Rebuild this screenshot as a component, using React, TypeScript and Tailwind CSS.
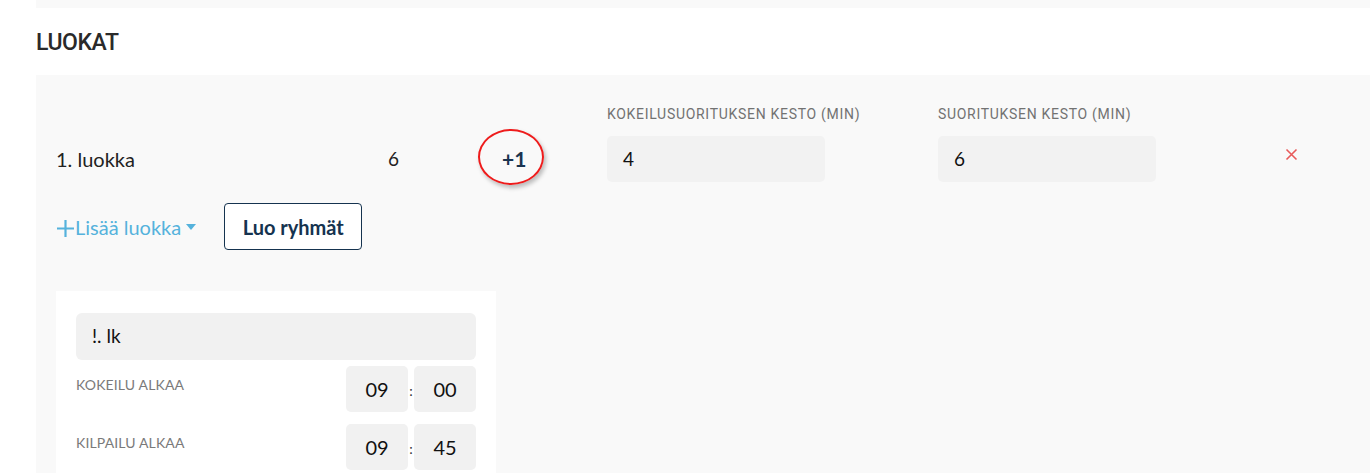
const body = "font-['Lato','Open_Sans',sans-serif]";
const cond = "font-['Roboto','Liberation_Sans',sans-serif]";

function DurationField({ label, value, width }: { label: string; value: string; width: string }) {
  return (
    <div className={`${width} flex flex-col`}>
      <span className={`${cond} text-[14px] leading-[18px] tracking-[0.05em] text-[#727272] mb-[13px]`}>{label}</span>
      <div className="w-[218px] h-[46px] rounded-[5px] bg-[#f2f2f2] flex items-center px-4 text-[19px] text-[#111]">
        {value}
      </div>
    </div>
  );
}

function TimeRow({ label, hh, mm }: { label: string; hh: string; mm: string }) {
  return (
    <div className="flex items-start justify-between">
      <span className="pt-[8px] text-[14px] text-[#7a7a7a] tracking-[0.01em]">{label}</span>
      <div className="flex items-center">
        <div className="w-[62px] h-[46px] rounded-[5px] bg-[#f1f1f1] flex items-center justify-center text-[20px] text-[#111]">
          {hh}
        </div>
        <span className="w-[6px] text-center text-[14px] text-[#333] leading-none mt-[4px]">:</span>
        <div className="w-[62px] h-[46px] rounded-[5px] bg-[#f1f1f1] flex items-center justify-center text-[20px] text-[#111]">
          {mm}
        </div>
      </div>
    </div>
  );
}

export default function App() {
  return (
    <div className={`${body} bg-white w-[1370px] h-[473px] overflow-hidden pl-[36px]`}>
      <div className="h-[8px] bg-[#f9f9f9]" />
      <h2 className={`${cond} font-medium text-[23px] tracking-[-0.02em] text-[#2a2a2a] h-[67px] flex items-center pt-[3px]`}>
        LUOKAT
      </h2>

      <div className="bg-[#f9f9f9] h-[400px] pl-[20px] pt-[30px]">
        {/* class row */}
        <div className="flex items-end">
          <div className="w-[332px] h-[46px] flex items-center text-[20px] text-[#222]">1. luokka</div>
          <div className="w-[114px] h-[46px] flex items-center text-[19px] text-[#222]">6</div>
          <div className="w-[105px] h-[46px] flex items-center">
            <div className="relative">
              <span className="text-[21px] font-bold text-[#1a3450]">+1</span>
              <span className="absolute left-1/2 top-1/2 -translate-x-1/2 -translate-y-1/2 ml-[-3px] mt-[-2px] w-[66px] h-[56px] rounded-[50%] border-2 border-[#ee1c1c] shadow-[2px_3px_4px_rgba(0,0,0,0.25)]" />
            </div>
          </div>
          <DurationField label="KOKEILUSUORITUKSEN KESTO (MIN)" value="4" width="w-[331px]" />
          <DurationField label="SUORITUKSEN KESTO (MIN)" value="6" width="w-[347px]" />
          <div className="h-[46px] flex items-start pt-[12px] text-[#e85a5a]">
            <svg width="13" height="13" viewBox="0 0 13 13" stroke="currentColor" strokeWidth="1.6">
              <path d="M1.5 1.5l10 10M11.5 1.5l-10 10" />
            </svg>
          </div>
        </div>

        {/* actions */}
        <div className="flex items-center mt-[21px] gap-[28px]">
          <button className="flex items-center text-[20px] text-[#55b2dc]">
            <svg width="19" height="19" viewBox="0 0 19 19" stroke="currentColor" strokeWidth="2.2" className="mt-[3px]">
              <path d="M9.5 1v17M1 9.5h17" />
            </svg>
            <span>Lisää luokka</span>
            <svg width="10" height="6" viewBox="0 0 10 6" fill="currentColor" className="ml-[5px]">
              <path d="M0 0h10L5 6z" />
            </svg>
          </button>
          <button className="h-[47px] w-[138px] rounded-[4px] border border-[#15334f] text-[20px] font-bold text-[#15334f] bg-white">
            Luo ryhmät
          </button>
        </div>

        {/* group card */}
        <div className="mt-[41px] w-[440px] bg-white p-[20px] pt-[22px] flex flex-col gap-[6px]">
          <div className="h-[47px] rounded-[6px] bg-[#f1f1f1] flex items-center px-[16px] text-[19px] text-[#111]">
            !. lk
          </div>
          <div className="flex flex-col gap-[12px]">
            <TimeRow label="KOKEILU ALKAA" hh="09" mm="00" />
            <TimeRow label="KILPAILU ALKAA" hh="09" mm="45" />
          </div>
        </div>
      </div>
    </div>
  );
}
